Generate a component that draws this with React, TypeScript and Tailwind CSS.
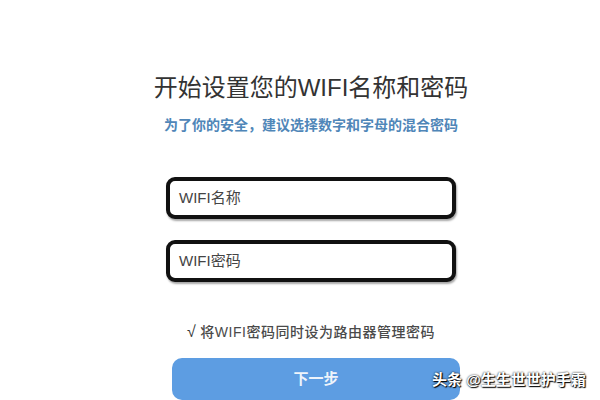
const font = { fontFamily: '"Liberation Sans", "Noto Sans CJK SC", sans-serif' };

const WifiInput = ({ placeholder }: { placeholder: string }) => (
	<div className="w-[290px] h-[42px] border-[4px] border-[#111] rounded-[9px] bg-white flex items-center px-[9px] shadow-[1px_2px_2px_rgba(0,0,0,0.35)]">
		<span className="text-[15px] text-[#444]">{placeholder}</span>
	</div>
);

export default function App() {
	return (
		<div className="w-[600px] h-[400px] bg-white overflow-hidden relative" style={font}>
			<div className="flex flex-col items-center pt-[72px] pl-[22px]">
				<h1 className="text-[24px] leading-[32px] text-[#333]">
					开始设置您的WIFI名称和密码
				</h1>
				<p className="mt-[11px] text-[14px] leading-[20px] font-bold text-[#4f86b8]">
					为了你的安全，建议选择数字和字母的混合密码
				</p>
				<div className="mt-[42px] flex flex-col gap-[21px]">
					<WifiInput placeholder="WIFI名称" />
					<WifiInput placeholder="WIFI密码" />
				</div>
				<div className="mt-[40px] text-[14px] leading-[20px] text-[#4a4a4a] font-medium tracking-[0.5px]">
					<span className="text-[16px] mr-[4px] text-[#333]">√</span>将WIFI密码同时设为路由器管理密码
				</div>
				<button className="mt-[16px] ml-[10px] w-[288px] h-[42px] rounded-[10px] bg-[#5d9de2] text-[#eef4fb] text-[15px] font-bold flex items-center justify-center">
					下一步
				</button>
			</div>
			<div className="absolute left-[432px] top-[369px] text-[15px] text-white font-bold [text-shadow:0_0_2px_#000,1px_1px_1px_#000]">
				头条 @生生世世护手霜
			</div>
		</div>
	);
}
